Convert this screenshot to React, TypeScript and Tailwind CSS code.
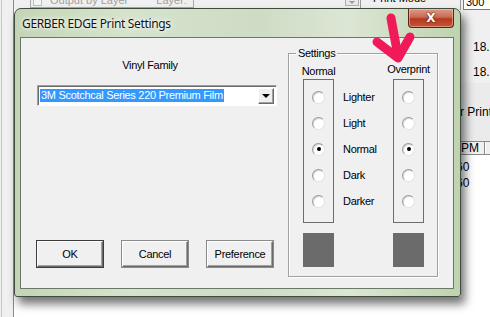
import React from 'react';

const ROWS = [
  { label: 'Lighter', checked: false },
  { label: 'Light', checked: false },
  { label: 'Normal', checked: true },
  { label: 'Dark', checked: false },
  { label: 'Darker', checked: false },
];

function Radio({ checked }: { checked?: boolean }) {
  return (
    <span className="flex h-[13px] w-[13px] items-center justify-center rounded-full border border-t-[#9a9a9a] border-l-[#9a9a9a] border-r-[#e2e2e2] border-b-[#e2e2e2] bg-white shadow-[inset_1px_1px_0_#dadada]">
      {checked && <span className="h-[4px] w-[4px] rounded-full bg-black" />}
    </span>
  );
}

function RadioColumn({ title, raised }: { title: string; raised?: boolean }) {
  return (
    <div className="flex w-[31px] flex-col items-center">
      <div className={`h-[14px] whitespace-nowrap leading-[14px] ${raised ? '-translate-y-[2px]' : ''}`}>{title}</div>
      <div className="mt-[1px] flex h-[144px] w-[31px] flex-col items-center border border-[#6d6d6d] pt-[4px]">
        {ROWS.map((r) => (
          <div key={r.label} className="flex h-[26px] items-center justify-center">
            <Radio checked={r.checked} />
          </div>
        ))}
      </div>
      <div className="mt-[10px] h-[34px] w-[31px] bg-[#6b6b6b]" />
    </div>
  );
}

function WinButton({ children, isDefault }: { children: React.ReactNode; isDefault?: boolean }) {
  return (
    <button
      className={`flex h-[26px] w-[66px] items-center justify-center border border-t-white border-l-white border-r-[#6b6b6b] border-b-[#6b6b6b] bg-[#f0f0f0] ${
        isDefault ? 'shadow-[inset_-1px_-1px_0_#a0a0a0,0_0_0_1px_#3c3c3c]' : 'shadow-[inset_-1px_-1px_0_#a0a0a0,0_0_0_1px_#8a8a8a]'
      }`}
    >
      {children}
    </button>
  );
}

function BackgroundApp() {
  return (
    <>
      {/* left panel of the app behind */}
      <div className="absolute left-0 top-0 h-full w-[14px] border-r border-[#8a8a8a] bg-[#f0f0f0]">
        <div className="ml-[1px] h-full w-[1px] bg-[#c8c8c8]" />
      </div>
      {/* top toolbar */}
      <div className="absolute left-[14px] right-0 top-0 h-[10px] bg-[#f0f0f0]">
        <div className="absolute left-[16px] top-[-10px] flex h-[18px] w-[164px] items-end gap-[8px] border border-[#a8a8a8] pb-[1px] pl-[2px] text-[#a0a0a0]">
          <span className="h-[9px] w-[9px] border border-[#c0c0c0] bg-[#f4f4f4]" />
          <span className="leading-[11px]">Output by Layer</span>
          <span className="ml-[20px] leading-[11px]">Layer:</span>
        </div>
        <div className="absolute left-[331px] top-[-6px] flex h-[12px] w-[14px] items-end justify-center border border-[#b0b0b0] bg-[#e8e8e8]">
          <span className="mb-[1px] h-0 w-0 border-x-[3px] border-t-[3px] border-x-transparent border-t-[#9a9a9a]" />
        </div>
        <div className="absolute left-[346px] top-0 h-[10px] w-[1px] bg-[#9a9a9a]" />
        <div className="absolute left-[359px] top-[-7px] leading-[11px]">Print Mode</div>
        <div className="absolute left-[446px] top-0 h-[10px] w-[1px] bg-[#9a9a9a]" />
        <div className="absolute left-[449px] top-[-4px] h-[14px] w-[40px] border-b border-l border-[#7a7a7a] bg-white pl-[2px] leading-[12px]">300</div>
      </div>
      {/* right panel of the app behind */}
      <div className="absolute left-[460px] right-0 top-[10px] bottom-0 flex flex-col bg-[#f0f0f0] text-[12px]">
        <div className="h-[73px] pl-[13px] pt-[30px]">
          <div className="leading-[14px]">18.2</div>
          <div className="mt-[11px] leading-[14px]">18.2</div>
        </div>
        <div className="flex h-[58px] items-center bg-[#ebebeb] whitespace-nowrap">r Print</div>
        <div className="flex h-[14px] border-y border-[#8a8a8a] bg-[#f0f0f0]">
          <div className="w-[25px] border-r border-[#8a8a8a] pl-[1px] leading-[12px]">PM</div>
          <div className="flex-1 border-l border-white" />
        </div>
        <div className="flex-1 bg-white">
          <div className="-ml-[4px] mt-[4px] leading-[16px]">60</div>
          <div className="-ml-[4px] leading-[16px]">60</div>
        </div>
      </div>
      {/* white area below dialog */}
      <div className="absolute left-[15px] right-[30px] top-[280px] bottom-0 bg-white" />
    </>
  );
}

function Dialog() {
  return (
    <div className="absolute left-[14px] top-[8px] flex h-[289px] w-[447px] flex-col rounded-t-[7px] rounded-b-[3px] border border-[#3f4b3d] bg-[linear-gradient(to_right,#c3d5b6,#d6e3cc_25%,#cfdcc5_55%,#dce6d4_75%,#bfd3af)] shadow-[4px_7px_10px_rgba(0,0,0,0.55)]">
      {/* title bar */}
      <div className="relative flex h-[28px] items-center pl-[7px] pt-[1px]">
        <span className="font-['Noto_Sans',sans-serif] text-[12px] tracking-[-0.35px] text-[#141414] [text-shadow:0_0_6px_#ffffff,0_0_3px_#ffffff]">
          GERBER EDGE Print Settings
        </span>
        <div className="absolute right-[6px] top-0 flex h-[19px] w-[46px] items-center justify-center rounded-b-[4px] border border-t-0 border-[#5a2218] bg-[linear-gradient(to_bottom,#dd9a88,#cb6a53_45%,#b23a20_55%,#c8543a)] shadow-[inset_0_0_0_1px_rgba(255,220,200,0.45)]">
          <span className="font-['DejaVu_Sans',sans-serif] text-[12px] font-bold leading-none text-white [text-shadow:0_0_2px_#4a1a10,0_0_1px_#4a1a10]">
            X
          </span>
        </div>
      </div>

      {/* client area */}
      <div className="ml-[5px] flex h-[252px] w-[434px] border border-[#6a7866] bg-[#f0f0f0] font-['Liberation_Sans',Arial,sans-serif] text-[11px] tracking-[-0.3px] text-black">
        {/* left part */}
        <div className="flex w-[267px] flex-col pl-[16px] pt-[21px]">
          <div className="w-[226px] text-center leading-[13px]">Vinyl Family</div>
          <div className="mt-[13px] flex h-[21px] w-[240px] items-center border border-t-[#a0a0a0] border-l-[#a0a0a0] border-r-white border-b-white bg-white pl-[2px] pr-[2px] shadow-[inset_1px_1px_0_#696969]">
            <span className="flex h-[13px] items-center bg-[#3399ff] pr-[1px] pl-[1px] whitespace-nowrap text-white">
              3M Scotchcal Series 220 Premium Film
            </span>
            <span className="ml-auto flex h-[16px] w-[16px] items-center justify-center border border-t-white border-l-white border-r-[#6b6b6b] border-b-[#6b6b6b] bg-[#f0f0f0] shadow-[inset_-1px_-1px_0_#a0a0a0]">
              <span className="h-0 w-0 border-x-[4px] border-t-[4px] border-x-transparent border-t-black" />
            </span>
          </div>
          <div className="mt-[135px] flex gap-[19px]">
            <WinButton isDefault>OK</WinButton>
            <WinButton>Cancel</WinButton>
            <WinButton>Preference</WinButton>
          </div>
        </div>

        {/* Settings group */}
        <div className="relative mt-[15px] h-[224px] w-[150px] border border-[#a0a0a0] shadow-[inset_1px_1px_0_#ffffff,1px_1px_0_#ffffff]">
          <span className="absolute left-[7px] top-[-7px] bg-[#f0f0f0] px-[2px] leading-[13px]">Settings</span>
          <div className="flex pl-[14px] pt-[10px]">
            <RadioColumn title="Normal" />
            <div className="flex w-[59px] flex-col pl-[9px] pt-[20px]">
              {ROWS.map((r) => (
                <div key={r.label} className="flex h-[26px] items-center">
                  {r.label}
                </div>
              ))}
            </div>
            <RadioColumn title="Overprint" raised />
          </div>
        </div>
      </div>
    </div>
  );
}

function Arrow() {
  return (
    <svg className="pointer-events-none absolute left-0 top-0" width="490" height="317" viewBox="0 0 490 317">
      <g fill="none" stroke="#ef1a57" strokeWidth="9" strokeLinecap="round" strokeLinejoin="round">
        <path d="M391 18 C393 30 396 44 398 57" />
        <path d="M377 42 L398 58 L410 37" />
      </g>
    </svg>
  );
}

export default function App() {
  return (
    <div className="relative h-[317px] w-[490px] overflow-hidden bg-white font-['Liberation_Sans',Arial,sans-serif] text-[11px] text-black">
      <BackgroundApp />
      <Dialog />
      <Arrow />
    </div>
  );
}
